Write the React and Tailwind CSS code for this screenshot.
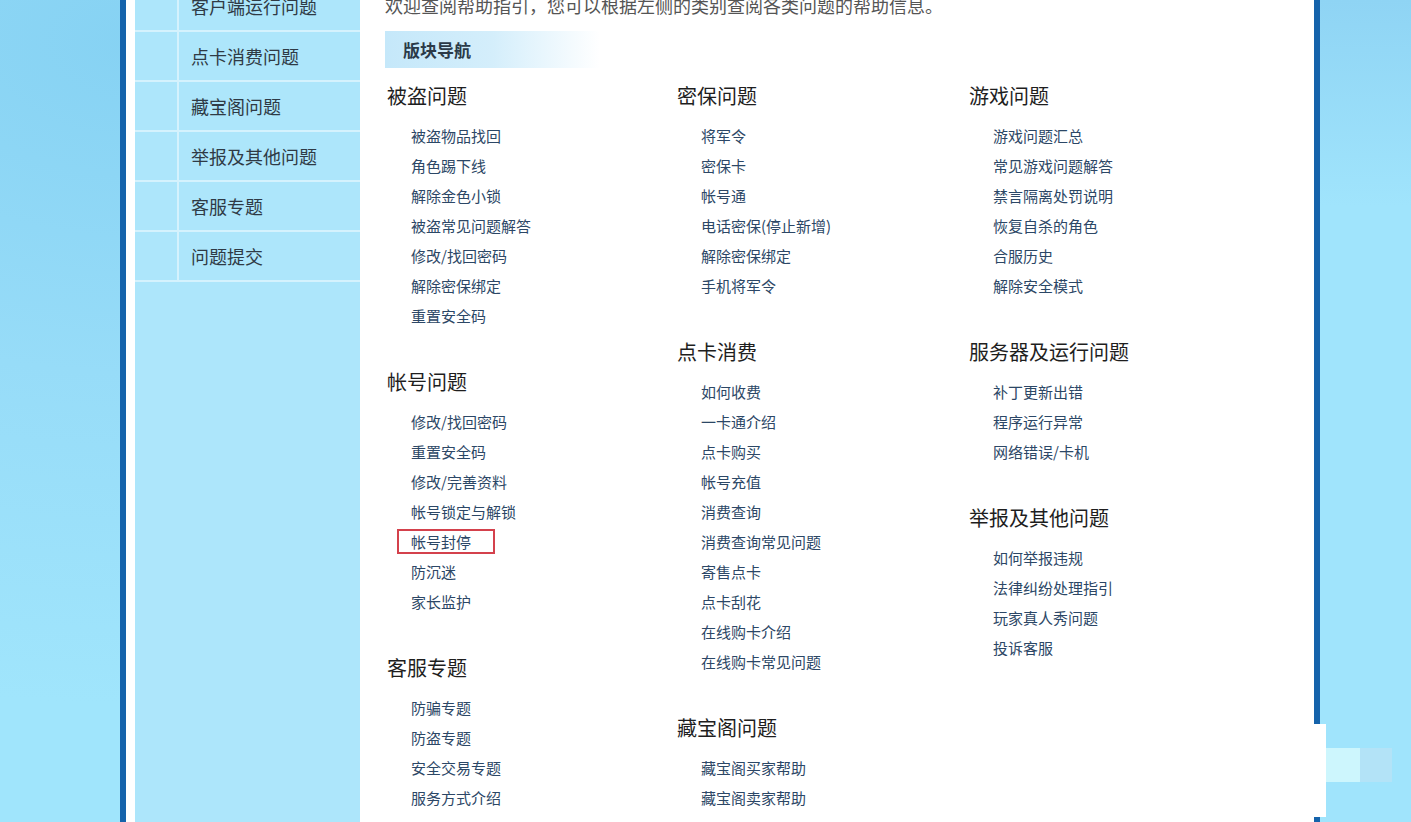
import React from 'react';

const font = { fontFamily: '"Noto Sans CJK SC", "Noto Sans", sans-serif' };

const sideItems = ['客户端运行问题', '点卡消费问题', '藏宝阁问题', '举报及其他问题', '客服专题', '问题提交'];

const columns = [
  [
    { title: '被盗问题', links: ['被盗物品找回', '角色踢下线', '解除金色小锁', '被盗常见问题解答', '修改/找回密码', '解除密保绑定', '重置安全码'] },
    { title: '帐号问题', links: ['修改/找回密码', '重置安全码', '修改/完善资料', '帐号锁定与解锁', '帐号封停', '防沉迷', '家长监护'] },
    { title: '客服专题', links: ['防骗专题', '防盗专题', '安全交易专题', '服务方式介绍'] },
  ],
  [
    { title: '密保问题', links: ['将军令', '密保卡', '帐号通', '电话密保(停止新增)', '解除密保绑定', '手机将军令'] },
    { title: '点卡消费', links: ['如何收费', '一卡通介绍', '点卡购买', '帐号充值', '消费查询', '消费查询常见问题', '寄售点卡', '点卡刮花', '在线购卡介绍', '在线购卡常见问题'] },
    { title: '藏宝阁问题', links: ['藏宝阁买家帮助', '藏宝阁卖家帮助'] },
  ],
  [
    { title: '游戏问题', links: ['游戏问题汇总', '常见游戏问题解答', '禁言隔离处罚说明', '恢复自杀的角色', '合服历史', '解除安全模式'] },
    { title: '服务器及运行问题', links: ['补丁更新出错', '程序运行异常', '网络错误/卡机'] },
    { title: '举报及其他问题', links: ['如何举报违规', '法律纠纷处理指引', '玩家真人秀问题', '投诉客服'] },
  ],
];

const Section = ({ title, links }) => (
  <div className="mb-[31px]">
    <h3 className="h-[40px] leading-[40px] text-[20px] text-[#1e1e1e] font-normal mb-[5px]">{title}</h3>
    <ul className="pl-[24px]">
      {links.map(l => (
        <li key={l} className="h-[30px] leading-[30px] text-[15px] text-[#2c4766]">
          {l === '帐号封停' ? (
            <span className="inline-block -ml-[14px] pl-[12px] w-[98px] h-[25px] leading-[21px] border-2 border-[#d4414c]">
              {l}
            </span>
          ) : (
            l
          )}
        </li>
      ))}
    </ul>
  </div>
);

export default function App() {
  return (
    <div
      className="relative flex w-full h-[822px] overflow-hidden bg-[radial-gradient(ellipse_at_10%_5%,#86d2f3_0%,#97dcf8_30%,#a0e5fc_60%)]"
      style={font}
    >
      {/* left background */}
      <div className="w-[120px] shrink-0" />
      <div className="w-[6px] shrink-0 bg-[#1563ab]" />
      <div className="w-[9px] shrink-0 bg-white" />

      {/* sidebar */}
      <aside className="w-[225px] shrink-0 bg-[#ade6fb]">
        <ul className="-mt-[18px]">
          {sideItems.map(item => (
            <li key={item} className="flex h-[50px] border-b-2 border-[#d4f2fd]">
              <div className="w-[44px] border-r-2 border-[#d4f2fd]" />
              <span className="pl-[12px] leading-[48px] text-[18px] text-[#2f3a45]">{item}</span>
            </li>
          ))}
        </ul>
      </aside>

      {/* content */}
      <main className="w-[954px] shrink-0 bg-white pl-[25px]">
        <p className="-mt-[8px] h-[26px] leading-[26px] text-[18px] text-[#555] whitespace-nowrap">
          欢迎查阅帮助指引，您可以根据左侧的类别查阅各类问题的帮助信息。
        </p>
        <div className="mt-[13px] w-[215px] h-[37px] bg-gradient-to-r from-[#c5e8fa] via-[#d4eefb] to-white pl-[18px] leading-[37px] text-[17px] font-bold text-[#2b3a48]">
          版块导航
        </div>
        <div className="mt-[8px] grid grid-cols-[290px_292px_292px] pl-[2px]">
          {columns.map((col, i) => (
            <div key={i}>
              {col.map(s => (
                <Section key={s.title} {...s} />
              ))}
            </div>
          ))}
        </div>
      </main>

      <div className="w-[6px] shrink-0 bg-[#1563ab]" />
      <div className="flex-1 bg-[linear-gradient(180deg,#8fd4f4_0%,#a0e4fc_25%)]" />

      {/* bottom-right overlay patch */}
      <div className="absolute left-[1314px] top-[724px] w-[12px] h-[93px] bg-white" />
      <div className="absolute left-[1326px] top-[748px] flex">
        <div className="w-[34px] h-[34px] bg-[#cdf6fd]" />
        <div className="w-[32px] h-[34px] bg-[#b3e3f7]" />
      </div>
    </div>
  );
}
